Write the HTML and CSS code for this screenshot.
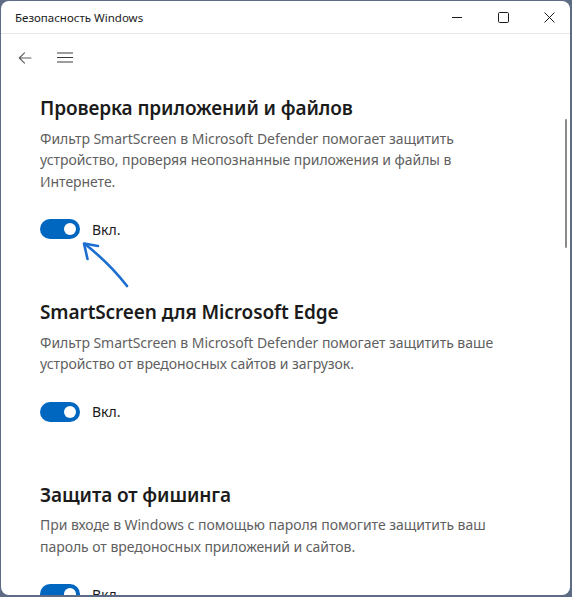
FILE: index.html
```html
<!DOCTYPE html>
<html lang="ru">
<head>
<meta charset="utf-8">
<title>Безопасность Windows</title>
<link rel="stylesheet" href="styles.css">
</head>
<body>
<div class="window">
  <header class="titlebar">
    <span class="title">Безопасность Windows</span>
    <div class="caption">
      <span class="cap-btn">
        <svg width="10" height="10" viewBox="0 0 10 10"><path d="M0 5.5H10" stroke="#1b1b1b" stroke-width="1"/></svg>
      </span>
      <span class="cap-btn">
        <svg width="11" height="11" viewBox="0 0 11 11"><rect x="0.5" y="0.5" width="10" height="10" rx="1.2" fill="none" stroke="#1b1b1b" stroke-width="1"/></svg>
      </span>
      <span class="cap-btn">
        <svg width="11" height="11" viewBox="0 0 11 11"><path d="M0.5 0.5L10.5 10.5M10.5 0.5L0.5 10.5" stroke="#1b1b1b" stroke-width="1"/></svg>
      </span>
    </div>
  </header>
  <nav class="navbar">
    <span class="nav-btn">
      <svg width="14" height="14" viewBox="0 0 14 14"><path d="M13 7H1.5M6.5 1.8L1.3 7L6.5 12.2" fill="none" stroke="#5d5d5d" stroke-width="1.1" stroke-linecap="round" stroke-linejoin="round"/></svg>
    </span>
    <span class="nav-btn menu">
      <svg width="16" height="12" viewBox="0 0 16 12"><path d="M0 1H16M0 5.5H16M0 10H16" stroke="#3b3b3b" stroke-width="1.1"/></svg>
    </span>
  </nav>
  <main class="content">
    <section class="section">
      <h2 class="heading">Проверка приложений и файлов</h2>
      <p class="desc">Фильтр SmartScreen в Microsoft Defender помогает защитить устройство, проверяя неопознанные приложения и файлы в Интернете.</p>
      <div class="toggle-row"><span class="toggle"><span class="knob"></span></span><span class="state">Вкл.</span></div>
      <svg class="annot" width="60" height="60" viewBox="0 0 60 60">
        <path d="M47 50 Q 30 28 5 8" fill="none" stroke="#1c6fd0" stroke-width="2.6" stroke-linecap="round"/>
        <path d="M18 10 L4 7.5 L7.5 23" fill="none" stroke="#1c6fd0" stroke-width="2.6" stroke-linecap="round" stroke-linejoin="round"/>
      </svg>
    </section>
    <section class="section">
      <h2 class="heading">SmartScreen для Microsoft Edge</h2>
      <p class="desc">Фильтр SmartScreen в Microsoft Defender помогает защитить ваше устройство от вредоносных сайтов и загрузок.</p>
      <div class="toggle-row"><span class="toggle"><span class="knob"></span></span><span class="state">Вкл.</span></div>
    </section>
    <section class="section">
      <h2 class="heading">Защита от фишинга</h2>
      <p class="desc">При входе в Windows с помощью пароля помогите защитить ваш пароль от вредоносных приложений и сайтов.</p>
      <div class="toggle-row"><span class="toggle"><span class="knob"></span></span><span class="state">Вкл.</span></div>
    </section>
  </main>
  <div class="scrollbar"></div>
</div>
</body>
</html>
```

FILE: styles.css
```css
html, body {
  margin: 0;
  padding: 0;
  height: 100%;
  background: #5d6c84;
  overflow: hidden;
}

body {
  font-family: "Segoe UI", "Noto Sans", sans-serif;
  color: #1b1b1b;
}

.window {
  position: relative;
  margin: 1px 2px 0 1px;
  height: 594px;
  background: #ffffff;
  border-radius: 8px;
  overflow: hidden;
  display: flex;
  flex-direction: column;
}

.titlebar {
  flex: none;
  height: 32px;
  border-bottom: 1px solid #e6e6e6;
  display: flex;
  align-items: center;
  padding-left: 14px;
}

.title {
  font-size: 11.5px;
  color: #1b1b1b;
  flex: 1;
}

.caption {
  display: flex;
  margin-right: -2px;
  height: 100%;
}

.cap-btn {
  width: 46px;
  display: flex;
  align-items: center;
  justify-content: center;
}

.navbar {
  flex: none;
  height: 48px;
  display: flex;
  align-items: center;
  padding-left: 17px;
  gap: 25px;
}

.nav-btn {
  display: flex;
  align-items: center;
}

.content {
  padding: 12px 30px 0 39px;
}

.section {
  position: relative;
  margin-bottom: 59px;
}

.heading {
  margin: 0;
  font-size: 19px;
  font-weight: 600;
  line-height: 28px;
  letter-spacing: -0.1px;
  color: #1b1b1b;
}

.desc {
  margin: 5.5px 0 0;
  font-size: 14px;
  line-height: 21.5px;
  letter-spacing: -0.05px;
  color: #5f5f5f;
  max-width: 470px;
}

.toggle-row {
  margin-top: 27px;
  display: flex;
  align-items: center;
  gap: 12px;
  height: 20px;
}

.toggle {
  width: 40px;
  height: 20px;
  border-radius: 10px;
  background: #0067c0;
  display: flex;
  align-items: center;
  justify-content: flex-end;
  padding-right: 4px;
  box-sizing: border-box;
}

.knob {
  width: 12px;
  height: 12px;
  border-radius: 50%;
  background: #ffffff;
}

.state {
  font-size: 14px;
  color: #1b1b1b;
}

.annot {
  position: absolute;
  left: 40px;
  top: 142px;
}

.scrollbar {
  position: absolute;
  right: 3px;
  top: 118px;
  width: 2px;
  height: 129px;
  border-radius: 1px;
  background: #8a8a8a;
}
```
